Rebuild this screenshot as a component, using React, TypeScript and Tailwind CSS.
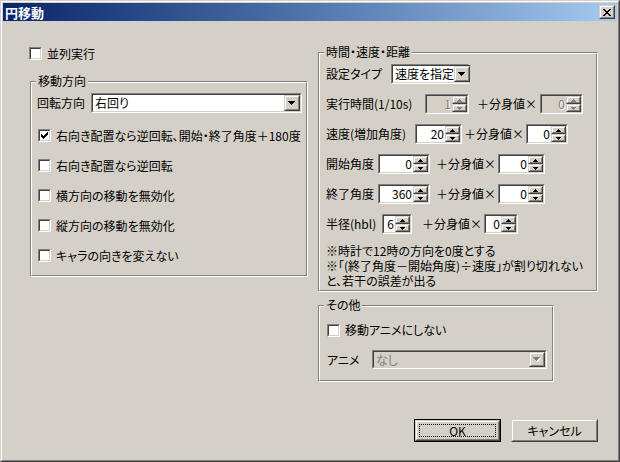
import React from 'react';

// classic Win2000 dialog pieces
const Raised = ({ className = '', children }: { className?: string; children?: React.ReactNode }) => (
    <div className={`flex border border-t-[#d4d0c8] border-l-[#d4d0c8] border-r-[#404040] border-b-[#404040] ${className}`}>
        <div className="flex flex-1 items-center justify-center border border-t-white border-l-white border-r-[#808080] border-b-[#808080] bg-[#d4d0c8]">
            {children}
        </div>
    </div>
);

const Sunken = ({ className = '', disabled = false, children }: { className?: string; disabled?: boolean; children?: React.ReactNode }) => (
    <div className={`flex border border-t-[#808080] border-l-[#808080] border-r-white border-b-white ${className}`}>
        <div className={`flex flex-1 items-center border border-t-[#404040] border-l-[#404040] border-r-[#d4d0c8] border-b-[#d4d0c8] ${disabled ? 'bg-[#d4d0c8]' : 'bg-white'}`}>
            {children}
        </div>
    </div>
);

const DownArrow = ({ disabled = false }: { disabled?: boolean }) => (
    <svg width="8" height="5" viewBox="0 0 8 5" shapeRendering="crispEdges">
        {disabled && <path d="M1 1h7v1H1z M2 2h5v1H2z M3 3h3v1H3z M4 4h1v1H4z" fill="#fff" />}
        <path d="M0 0h7v1H0z M1 1h5v1H1z M2 2h3v1H2z M3 3h1v1H3z" fill={disabled ? '#808080' : '#000'} />
    </svg>
);

const SpinArrow = ({ up, disabled }: { up: boolean; disabled: boolean }) => (
    <svg width="5" height="3" viewBox="0 0 5 3" shapeRendering="crispEdges">
        <path d={up ? 'M2 0h1v1H2z M1 1h3v1H1z M0 2h5v1H0z' : 'M0 0h5v1H0z M1 1h3v1H1z M2 2h1v1H2z'} fill={disabled ? '#808080' : '#000'} />
    </svg>
);

const Combo = ({ value, className = '', disabled = false }: { value: string; className?: string; disabled?: boolean }) => (
    <Sunken className={className} disabled={disabled}>
        <span className={`flex-1 pl-[2px] leading-[14px] whitespace-nowrap ${disabled ? 'text-[#808080]' : ''}`}>{value}</span>
        <Raised className="w-[16px] self-stretch">
            <DownArrow disabled={disabled} />
        </Raised>
    </Sunken>
);

const Spin = ({ value, className = '', disabled = false }: { value: string; className?: string; disabled?: boolean }) => (
    <Sunken className={`h-[20px] ${className}`} disabled={disabled}>
        <span className={`flex-1 text-right pr-[1px] leading-[14px] ${disabled ? 'text-[#808080] [text-shadow:1px_1px_0_#fff]' : ''}`}>{value}</span>
        <div className="flex flex-col w-[15px] self-stretch">
            <Raised className="h-[8px]"><SpinArrow up disabled={disabled} /></Raised>
            <Raised className="h-[8px]"><SpinArrow up={false} disabled={disabled} /></Raised>
        </div>
    </Sunken>
);

const CheckBox = ({ label, checked = false, className = '' }: { label: string; checked?: boolean; className?: string }) => (
    <div className={`flex items-center ${className}`}>
        <div className="w-[13px] h-[13px] flex border border-t-[#808080] border-l-[#808080] border-r-white border-b-white">
            <div className="flex-1 flex items-center justify-center bg-white border border-t-[#404040] border-l-[#404040] border-r-[#d4d0c8] border-b-[#d4d0c8]">
                {checked && (
                    <svg width="7" height="7" viewBox="0 0 7 7" shapeRendering="crispEdges">
                        <path d="M6 0h1v1H6z M5 1h2v1H5z M0 2h1v1H0z M4 2h3v1H4z M0 3h2v1H0z M3 3h3v1H3z M0 4h5v1H0z M1 5h3v1H1z M2 6h1v1H2z" fill="#000" />
                    </svg>
                )}
            </div>
        </div>
        <span className="ml-[5px] leading-[14px] whitespace-nowrap">{label}</span>
    </div>
);

const Group = ({ label, className = '', innerClassName = '', children }: { label: string; className?: string; innerClassName?: string; children?: React.ReactNode }) => (
    <div className={`relative flex border border-t-[#808080] border-l-[#808080] border-r-white border-b-white ${className}`}>
        <div className={`flex-1 flex flex-col border border-t-white border-l-white border-r-[#808080] border-b-[#808080] ${innerClassName}`}>
            {children}
        </div>
        <span className="absolute -top-[8px] left-[5px] px-[2px] bg-[#d4d0c8] leading-[14px] whitespace-nowrap">{label}</span>
    </div>
);

const PlusClone = ({ className = '' }: { className?: string }) => (
    <span className={`w-[62px] leading-[14px] whitespace-nowrap ${className}`}>＋分身値×</span>
);

const Button = ({ label, isDefault = false }: { label: string; isDefault?: boolean }) => (
    <div className={`w-[87px] h-[23px] flex ${isDefault ? 'border border-black' : ''}`}>
        <Raised className="flex-1">
            {isDefault ? (
                <div className="flex-1 self-stretch m-[2px] flex items-center justify-center border border-dotted border-black leading-[14px]">{label}</div>
            ) : (
                <span className="leading-[14px]">{label}</span>
            )}
        </Raised>
    </div>
);

export default function App() {
    return (
        <div className="w-[620px] h-[462px] font-['Noto_Sans_CJK_JP',sans-serif] text-[12px] text-black [font-feature-settings:'palt']">
            <div className="h-full flex border border-t-[#d4d0c8] border-l-[#d4d0c8] border-r-[#404040] border-b-[#404040]">
                <div className="flex-1 flex flex-col p-[1px] bg-[#d4d0c8] border border-t-white border-l-white border-r-[#808080] border-b-[#808080]">
                    {/* title bar */}
                    <div className="h-[18px] flex items-center pl-[2px] pr-[2px] bg-linear-to-r from-[#0a246a] to-[#a6caf0]">
                        <span className="text-white font-bold text-[13px] leading-none">円移動</span>
                        <Raised className="ml-auto w-[16px] h-[14px]">
                            <svg width="8" height="7" viewBox="0 0 8 7" shapeRendering="crispEdges">
                                <path d="M0 0h2v1H0z M6 0h2v1H6z M1 1h2v1H1z M5 1h2v1H5z M2 2h4v1H2z M3 3h2v1H3z M2 4h4v1H2z M1 5h2v1H1z M5 5h2v1H5z M0 6h2v1H0z M6 6h2v1H6z" fill="#000" />
                            </svg>
                        </Raised>
                    </div>

                    <div className="flex-1 flex flex-col pl-[27px] pr-[19px]">
                        <div className="flex items-start gap-[10px]">
                            {/* left column */}
                            <div className="w-[278px] flex flex-col pt-[26px]">
                                <CheckBox label="並列実行" className="h-[13px] -ml-[1px]" />
                                <Group label="移動方向" className="mt-[21px]" innerClassName="pt-[10px] pb-[13px] pl-[5px] pr-[4px]">
                                    <div className="flex items-center h-[20px]">
                                        <span className="leading-[14px] whitespace-nowrap">回転方向</span>
                                        <Combo value="右回り" className="ml-[6px] flex-1 h-[20px]" />
                                    </div>
                                    <div className="flex flex-col gap-[17px] mt-[16px] ml-[1px]">
                                        <CheckBox label="右向き配置なら逆回転、開始・終了角度＋180度" checked className="h-[13px]" />
                                        <CheckBox label="右向き配置なら逆回転" className="h-[13px]" />
                                        <CheckBox label="横方向の移動を無効化" className="h-[13px]" />
                                        <CheckBox label="縦方向の移動を無効化" className="h-[13px]" />
                                        <CheckBox label="キャラの向きを変えない" className="h-[13px]" />
                                    </div>
                                </Group>
                            </div>

                            {/* right column */}
                            <div className="w-[280px] flex flex-col pt-[31px]">
                                <Group label="時間・速度・距離" innerClassName="pt-[10px] pb-[2px] pl-[6px]">
                                    <div className="flex flex-col gap-[10px]">
                                        <div className="flex items-center h-[20px]">
                                            <span className="w-[65px] leading-[14px] whitespace-nowrap">設定タイプ</span>
                                            <Combo value="速度を指定" className="w-[78px] h-[20px]" />
                                        </div>
                                        <div className="flex items-center h-[20px]">
                                            <span className="w-[99px] leading-[14px] whitespace-nowrap">実行時間(1/10s)</span>
                                            <Spin value="1" disabled className="w-[44px]" />
                                            <PlusClone className="ml-[8px] mr-[1px]" />
                                            <Spin value="0" disabled className="w-[43px]" />
                                        </div>
                                        <div className="flex items-center h-[20px]">
                                            <span className="w-[89px] leading-[14px] whitespace-nowrap">速度(増加角度)</span>
                                            <Spin value="20" className="w-[47px]" />
                                            <PlusClone className="ml-[2px]" />
                                            <Spin value="0" className="w-[42px]" />
                                        </div>
                                        <div className="flex items-center h-[20px]">
                                            <span className="w-[52px] leading-[14px] whitespace-nowrap">開始角度</span>
                                            <Spin value="0" className="w-[52px]" />
                                            <PlusClone className="ml-[6px]" />
                                            <Spin value="0" className="w-[47px]" />
                                        </div>
                                        <div className="flex items-center h-[20px]">
                                            <span className="w-[52px] leading-[14px] whitespace-nowrap">終了角度</span>
                                            <Spin value="360" className="w-[52px]" />
                                            <PlusClone className="ml-[6px]" />
                                            <Spin value="0" className="w-[47px]" />
                                        </div>
                                        <div className="flex items-center h-[20px]">
                                            <span className="w-[56px] leading-[14px] whitespace-nowrap">半径(hbl)</span>
                                            <Spin value="6" className="w-[30px]" />
                                            <PlusClone className="ml-[10px]" />
                                            <Spin value="0" className="w-[34px]" />
                                        </div>
                                    </div>
                                    <p className="mt-[9px] leading-[15px] whitespace-nowrap">
                                        ※時計で12時の方向を0度とする<br />
                                        ※「(終了角度－開始角度)÷速度」が割り切れない<br />
                                        と、若干の誤差が出る
                                    </p>
                                </Group>

                                <Group label="その他" className="mt-[13px] w-[236px]" innerClassName="pt-[13px] pb-[11px] pl-[7px] pr-[5px]">
                                    <CheckBox label="移動アニメにしない" className="h-[20px]" />
                                    <div className="flex items-center h-[19px] mt-[10px]">
                                        <span className="w-[45px] leading-[14px] whitespace-nowrap">アニメ</span>
                                        <Combo value="なし" disabled className="flex-1 h-[19px]" />
                                    </div>
                                </Group>
                            </div>
                        </div>

                        <div className="flex justify-end gap-[10px] mt-[37px]">
                            <Button label="OK" isDefault />
                            <Button label="キャンセル" />
                        </div>
                    </div>
                </div>
            </div>
        </div>
    );
}
